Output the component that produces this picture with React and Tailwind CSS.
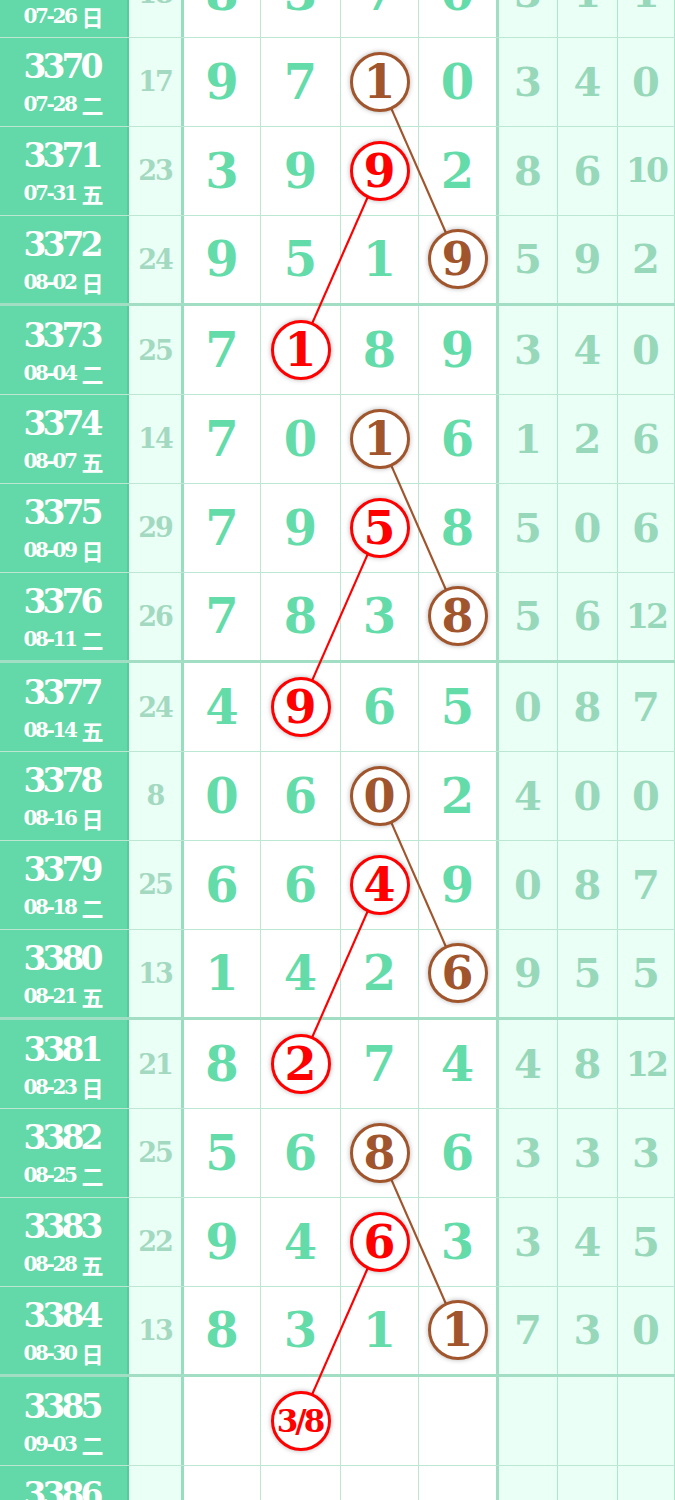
import React from 'react';

const data = [
  ['3369', '07-26', '日', '18', [8, 3, 7, 0], [3, 1, 1], null],
  ['3370', '07-28', '二', '17', [9, 7, 1, 0], [3, 4, 0], { c: 2, t: 'b' }],
  ['3371', '07-31', '五', '23', [3, 9, 9, 2], [8, 6, 10], { c: 2, t: 'r' }],
  ['3372', '08-02', '日', '24', [9, 5, 1, 9], [5, 9, 2], { c: 3, t: 'b' }],
  ['3373', '08-04', '二', '25', [7, 1, 8, 9], [3, 4, 0], { c: 1, t: 'r' }],
  ['3374', '08-07', '五', '14', [7, 0, 1, 6], [1, 2, 6], { c: 2, t: 'b' }],
  ['3375', '08-09', '日', '29', [7, 9, 5, 8], [5, 0, 6], { c: 2, t: 'r' }],
  ['3376', '08-11', '二', '26', [7, 8, 3, 8], [5, 6, 12], { c: 3, t: 'b' }],
  ['3377', '08-14', '五', '24', [4, 9, 6, 5], [0, 8, 7], { c: 1, t: 'r' }],
  ['3378', '08-16', '日', '8', [0, 6, 0, 2], [4, 0, 0], { c: 2, t: 'b' }],
  ['3379', '08-18', '二', '25', [6, 6, 4, 9], [0, 8, 7], { c: 2, t: 'r' }],
  ['3380', '08-21', '五', '13', [1, 4, 2, 6], [9, 5, 5], { c: 3, t: 'b' }],
  ['3381', '08-23', '日', '21', [8, 2, 7, 4], [4, 8, 12], { c: 1, t: 'r' }],
  ['3382', '08-25', '二', '25', [5, 6, 8, 6], [3, 3, 3], { c: 2, t: 'b' }],
  ['3383', '08-28', '五', '22', [9, 4, 6, 3], [3, 4, 5], { c: 2, t: 'r' }],
  ['3384', '08-30', '日', '13', [8, 3, 1, 1], [7, 3, 0], { c: 3, t: 'b' }],
  ['3385', '09-03', '二', '', [null, '3/8', null, null], [null, null, null], { c: 1, t: 'r' }],
  ['3386', '09-06', '五', '', [null, null, null, null], [null, null, null], null],
];

const THIN = 88.75;
const THICK = 90.75;
const isThick = (i) => i % 4 === 3;
const colX = [222, 300.5, 379.5, 457.5];

const tops = [];
{
  let y = 0;
  data.forEach((_, i) => {
    tops.push(y);
    y += isThick(i) ? THICK : THIN;
  });
}
const centerY = (i) => tops[i] + ((isThick(i) ? THICK - 3 : THIN - 1) / 2);

const pairs = [
  [1, 3, '#a0552c'],
  [5, 7, '#a0552c'],
  [9, 11, '#a0552c'],
  [13, 15, '#a0552c'],
  [2, 4, '#ff0000'],
  [6, 8, '#ff0000'],
  [10, 12, '#ff0000'],
  [14, 16, '#ff0000'],
];

function Circle({ t, v }) {
  const red = t === 'r';
  const small = typeof v === 'string' && v.length > 1;
  return (
    <div
      className={
        'relative z-10 flex h-[60px] w-[60px] items-center justify-center rounded-full border-[3px] bg-white shadow-[0_0_5px_rgba(0,0,0,0.3)] ' +
        (red ? 'border-[#ff0000] text-[#ff0000]' : 'border-[#a0552c] text-[#a0552c]')
      }
    >
      <span
        className={
          small
            ? 'text-[31px] leading-none tracking-[-3px] pr-[2px] font-bold'
            : 'text-[46px] leading-none font-bold'
        }
      >
        {v}
      </span>
    </div>
  );
}

export default function App() {
  const totalH = tops[tops.length - 1] + THIN;
  return (
    <div className="h-[1500px] w-[675px] overflow-hidden bg-white font-['DejaVu_Serif','Noto_Sans_CJK_SC',serif]">
      <div className="relative mt-[-50.75px]">
        {data.map((r, i) => {
          const [p, d, w, s, nums, sides, circ] = r;
          const thick = isThick(i);
          return (
            <div
              key={p}
              className={
                'grid grid-cols-[129px_55px_77px_80px_78px_80px_59px_60px_57px] ' +
                (thick
                  ? 'h-[90.75px] border-b-[3px] border-[#3cb9827a]'
                  : 'h-[88.75px] border-b border-[#3cb98259]')
              }
            >
              <div className="flex flex-col items-center justify-center border-r-2 border-[#3cb98259] bg-[#63d8a8] pt-[2px] text-white">
                <div className="text-[33px] font-bold leading-none tracking-[-4px] pr-[4px]">{p}</div>
                <div className="mt-[10px] flex items-center text-[20px] font-bold leading-none">
                  <span className="tracking-[-2.4px]">{d}</span>
                  <span className="ml-[6px] font-['Noto_Sans_CJK_SC',sans-serif] text-[22px] font-bold">{w}</span>
                </div>
              </div>
              <div className="flex items-center justify-center border-r-[3px] border-[#3cb9827a] bg-[#eafff5] text-[27px] font-bold leading-none tracking-[-2px] text-[#a3d9c0]">
                {s}
              </div>
              {[0, 1, 2, 3].map((c) => (
                <div
                  key={c}
                  className={
                    'flex items-center justify-center bg-white text-[48px] font-bold leading-none text-[#64dcaa] ' +
                    (c === 3 ? 'border-r-[3px] border-[#3cb9827a]' : 'border-r border-[#3cb98259]')
                  }
                >
                  {circ && circ.c === c ? (
                    <Circle t={circ.t} v={nums[c]} />
                  ) : (
                    nums[c]
                  )}
                </div>
              ))}
              {[0, 1, 2].map((c) => {
                const v = sides[c];
                const two = v !== null && v !== undefined && String(v).length > 1;
                return (
                  <div
                    key={c}
                    className={
                      'flex items-center justify-center border-r border-[#3cb98259] bg-[#eafff5] font-bold leading-none text-[#98d8ba] ' +
                      (two ? 'text-[33px] tracking-[-3px]' : 'text-[40px]')
                    }
                  >
                    {v}
                  </div>
                );
              })}
            </div>
          );
        })}
        <svg
          className="pointer-events-none absolute left-0 top-0 z-[5]"
          width="675"
          height={totalH}
          viewBox={`0 0 675 ${totalH}`}
        >
          {pairs.map(([a, b, col], k) => {
            const ca = data[a][6].c;
            const cb = data[b][6].c;
            return (
              <line
                key={k}
                x1={colX[ca]}
                y1={centerY(a)}
                x2={colX[cb]}
                y2={centerY(b)}
                stroke={col}
                strokeWidth="2.2"
              />
            );
          })}
        </svg>
      </div>
    </div>
  );
}
